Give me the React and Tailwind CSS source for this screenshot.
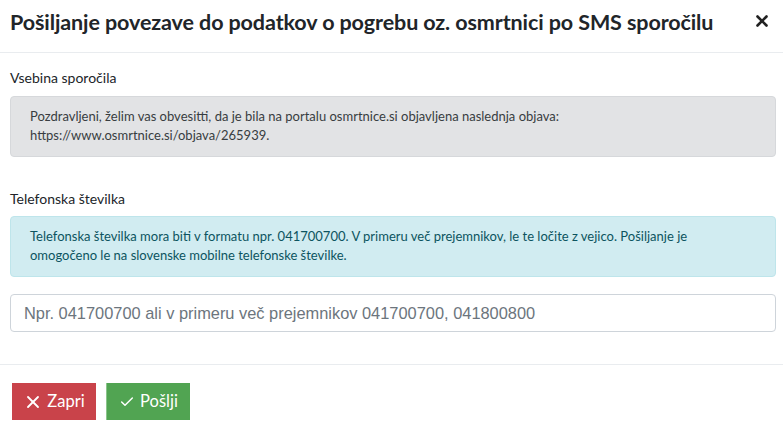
import { X, Check } from 'lucide-react';

export default function App() {
  return (
    <div className="w-[783px] h-[432px] bg-white font-['Lato','Noto_Sans',sans-serif] text-[#212529] flex flex-col">
      {/* Header */}
      <div className="h-[53px] flex items-start justify-between pl-[10px] pr-[12px] pt-[9px] border-b border-[#e9ecef]">
        <h1 className="text-[21.5px] font-bold tracking-[-0.1px] leading-[26px]">
          Pošiljanje povezave do podatkov o pogrebu oz. osmrtnici po SMS sporočilu
        </h1>
        <X className="w-[18px] h-[18px] mt-[3px] text-[#222]" strokeWidth={3.5} />
      </div>

      {/* Body */}
      <div className="flex-1 px-[10px] pt-[15px] flex flex-col">
        <label className="text-[14px] leading-[20px] mb-[8px]">Vsebina sporočila</label>
        <div className="mr-[-3px] bg-[#e2e3e5] border border-[#d6d8db] rounded-[4px] px-[19px] pt-[10px] pb-[11px] text-[13px] leading-[19px] text-[#383d41]">
          Pozdravljeni, želim vas obvesitti, da je bila na portalu osmrtnice.si objavljena naslednja objava:
          <br />
          https://www.osmrtnice.si/objava/265939.
        </div>

        <label className="text-[14px] leading-[20px] mt-[32px] mb-[7px]">Telefonska številka</label>
        <div className="mr-[-3px] bg-[#d1ecf1] border border-[#bee5eb] rounded-[4px] px-[19px] pt-[10px] pb-[11px] text-[13px] leading-[19px] text-[#0c5460]">
          Telefonska številka mora biti v formatu npr. 041700700. V primeru več prejemnikov, le te ločite z vejico. Pošiljanje je omogočeno le na slovenske mobilne telefonske številke.
        </div>

        <input
          type="text"
          placeholder="Npr. 041700700 ali v primeru več prejemnikov 041700700, 041800800"
          className="mt-[17px] mr-[-3px] h-[38px] border border-[#ced4da] rounded-[4px] px-[13px] text-[16.4px] font-['Liberation_Sans',sans-serif] placeholder:text-[#6c757d] outline-none"
        />
      </div>

      {/* Footer */}
      <div className="h-[68px] border-t border-[#e9ecef] flex items-start gap-[10px] pl-[12px] pt-[18px]">
        <button className="h-[37px] w-[84px] bg-[#c9434a] text-white text-[16.5px] flex items-center justify-center gap-[4px]">
          <X className="w-[20px] h-[20px]" strokeWidth={2.2} />
          Zapri
        </button>
        <button className="h-[37px] w-[84px] bg-[#51a452] text-white text-[16.5px] flex items-center justify-center gap-[5px] border-l border-[#8bc58b]">
          <Check className="w-[16px] h-[16px]" strokeWidth={2.2} />
          Pošlji
        </button>
      </div>
    </div>
  );
}
